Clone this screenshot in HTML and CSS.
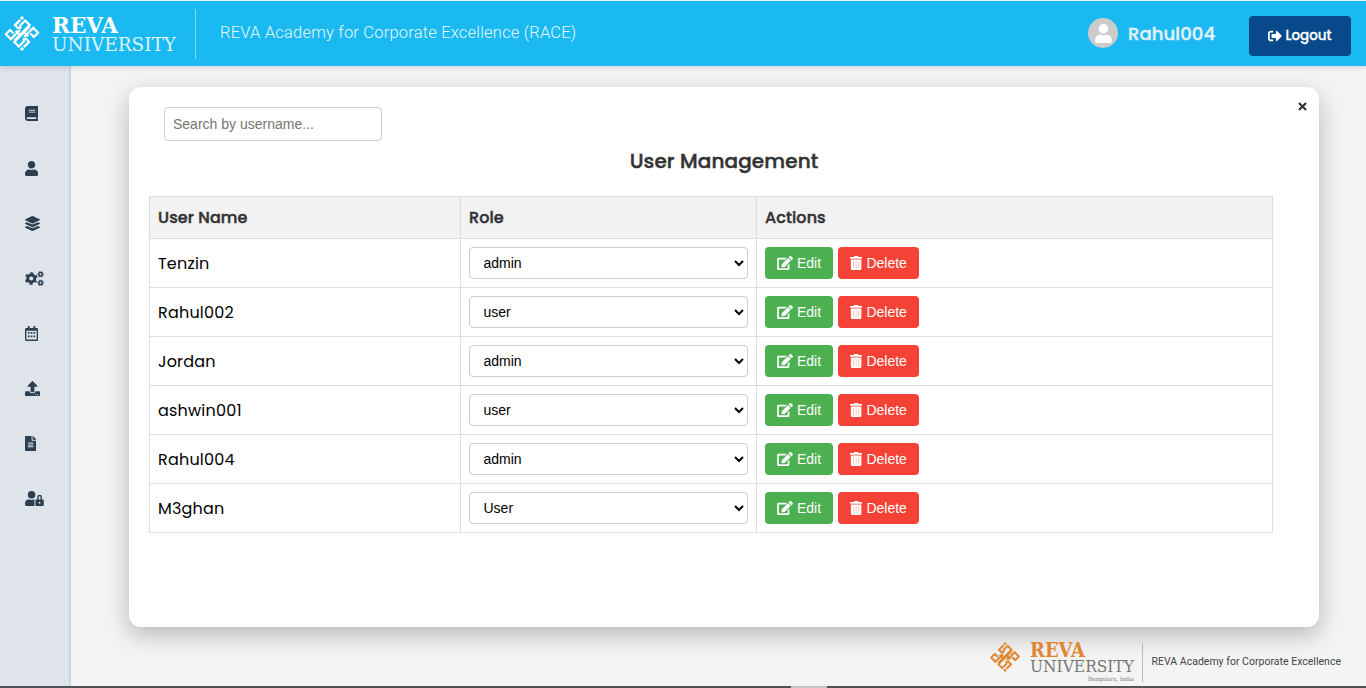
FILE: index.html
```html
<!DOCTYPE html>
<html lang="en">
<head>
<meta charset="utf-8">
<title>User Management</title>
<link rel="stylesheet" href="styles.css">
</head>
<body>
<svg class="defs" width="0" height="0">
  <symbol id="knot" viewBox="-50 -50 100 100">
    <g fill="none" stroke="currentColor" stroke-width="6.500">
      <path id="k" d="M6 10L32-16L46-2L34 10L24 0"/>
      <use href="#k" transform="rotate(180)"/>
      <path id="t" d="M-9-13L-20-24L-5-39M-5-13L-5-23L9-37L22-24L-22 20"/>
      <use href="#t" transform="rotate(180)"/>
      <path d="M-18-8L-6 4M18 8L6-4"/>
    </g>
    <path fill="currentColor" d="M0-50l6 6-6 6-6-6zM0 38l6 6-6 6-6-6z"/>
  </symbol>
  <symbol id="edit" viewBox="0 0 576 512"><path d="M402.6 83.2l90.2 90.2c3.8 3.8 3.8 10 0 13.8L274.4 405.6l-92.8 10.3c-12.4 1.4-22.9-9.1-21.5-21.5l10.3-92.8L388.8 83.2c3.8-3.8 10-3.8 13.8 0zm162-22.9l-48.8-48.8c-15.2-15.2-39.9-15.2-55.2 0l-35.4 35.4c-3.8 3.8-3.8 10 0 13.8l90.2 90.2c3.8 3.8 10 3.8 13.8 0l35.4-35.4c15.2-15.3 15.2-40 0-55.2zM384 346.2V448H64V128h229.8c3.2 0 6.2-1.3 8.5-3.5l40-40c7.6-7.6 2.2-20.5-8.5-20.5H48C21.5 64 0 85.5 0 112v352c0 26.5 21.5 48 48 48h352c26.5 0 48-21.5 48-48V306.2c0-10.7-12.9-16-20.5-8.5l-40 40c-2.2 2.3-3.5 5.3-3.5 8.5z"/></symbol>
  <symbol id="trash" viewBox="0 0 448 512"><path fill-opacity=".65" d="M96 190h256v270H96z"/><path d="M32 464a48 48 0 0 0 48 48h288a48 48 0 0 0 48-48V128H32zm272-256a16 16 0 0 1 32 0v224a16 16 0 0 1-32 0zm-96 0a16 16 0 0 1 32 0v224a16 16 0 0 1-32 0zm-96 0a16 16 0 0 1 32 0v224a16 16 0 0 1-32 0zM432 32H312l-9.4-18.7A24 24 0 0 0 281.1 0H166.8a23.72 23.72 0 0 0-21.4 13.3L136 32H16A16 16 0 0 0 0 48v32a16 16 0 0 0 16 16h416a16 16 0 0 0 16-16V48a16 16 0 0 0-16-16z"/></symbol>
  <symbol id="user" viewBox="0 0 448 512"><path d="M224 256c70.7 0 128-57.3 128-128S294.7 0 224 0 96 57.3 96 128s57.3 128 128 128zm89.6 32h-16.7c-22.2 10.2-46.9 16-72.9 16s-50.6-5.8-72.9-16h-16.7C60.2 288 0 348.2 0 422.4V464c0 26.5 21.5 48 48 48h352c26.5 0 48-21.5 48-48v-41.6c0-74.2-60.2-134.4-134.4-134.4z"/></symbol>
</svg>

<header class="topbar">
  <svg class="brand" width="200" height="65" viewBox="0 1 200 65">
    <use href="#knot" x="4.500" y="16" width="35" height="35"/>
    <g class="slab" fill="#fff">
      <text class="slab-bold" x="52" y="32.500" font-size="22.500" textLength="66" lengthAdjust="spacingAndGlyphs">REVA</text>
      <text x="52" y="51" font-size="19" textLength="124" lengthAdjust="spacingAndGlyphs" fill-opacity=".85">UNIVERSITY</text>
    </g>
    <path d="M195.500 9V59" stroke="#fff" stroke-opacity=".45"/>
  </svg>
  <span class="academy">REVA Academy for Corporate Excellence (RACE)</span>
  <div class="account">
    <span class="avatar"><svg width="17" height="19"><use href="#user"/></svg></span>
    <span class="account-name">Rahul004</span>
    <button class="logout"><svg width="14" height="14" viewBox="0 0 512 512"><path d="M497 273L329 441c-15 15-41 4.500-41-17v-96H152c-13.300 0-24-10.700-24-24v-96c0-13.300 10.700-24 24-24h136V88c0-21.400 25.900-32 41-17l168 168c9.300 9.400 9.300 24.600 0 34zM192 436v-40c0-6.600-5.400-12-12-12H96c-17.700 0-32-14.300-32-32V160c0-17.700 14.300-32 32-32h84c6.600 0 12-5.400 12-12V76c0-6.600-5.400-12-12-12H96c-53 0-96 43-96 96v192c0 53 43 96 96 96h84c6.600 0 12-5.400 12-12z"/></svg><span>Logout</span></button>
  </div>
</header>

<div class="shell">
  <nav class="sidebar">
    <svg width="13.100" height="15" viewBox="0 0 448 512"><path d="M448 360V24c0-13.300-10.700-24-24-24H96C43 0 0 43 0 96v320c0 53 43 96 96 96h328c13.300 0 24-10.700 24-24v-16c0-7.500-3.500-14.300-8.900-18.700-4.200-15.400-4.200-59.300 0-74.700 5.400-4.300 8.900-11.100 8.900-18.600zM128 134c0-3.300 2.700-6 6-6h212c3.300 0 6 2.700 6 6v20c0 3.300-2.700 6-6 6H134c-3.300 0-6-2.700-6-6v-20zm0 64c0-3.300 2.700-6 6-6h212c3.300 0 6 2.700 6 6v20c0 3.300-2.700 6-6 6H134c-3.300 0-6-2.700-6-6v-20zm253.400 250H96c-17.700 0-32-14.300-32-32 0-17.600 14.400-32 32-32h285.400c-1.900 17.100-1.900 46.900 0 64z"/></svg>
    <svg width="13.100" height="15"><use href="#user"/></svg>
    <svg width="15" height="15" viewBox="0 0 512 512"><path d="M12.410 148.020l232.940 105.670c6.800 3.090 14.490 3.090 21.290 0l232.940-105.670c16.550-7.510 16.550-32.520 0-40.030L266.650 2.310a25.607 25.607 0 0 0-21.290 0L12.410 107.980c-16.550 7.510-16.550 32.530 0 40.040zm487.180 88.280l-58.090-26.330-161.640 73.270c-7.560 3.430-15.590 5.170-23.860 5.170s-16.290-1.740-23.860-5.170L70.510 209.970l-58.100 26.330c-16.550 7.500-16.550 32.500 0 40l232.940 105.590c6.800 3.080 14.490 3.080 21.290 0L499.590 276.300c16.550-7.500 16.550-32.500 0-40zm0 127.800l-57.870-26.230-161.860 73.370c-7.560 3.430-15.590 5.170-23.860 5.170s-16.290-1.740-23.860-5.170L70.290 337.870 12.410 364.100c-16.550 7.500-16.550 32.500 0 40l232.940 105.590c6.800 3.080 14.490 3.080 21.290 0L499.590 404.100c16.550-7.500 16.550-32.500 0-40z"/></svg>
    <svg width="18.800" height="15" viewBox="0 0 640 512">
      <g fill="none" stroke="currentColor">
        <circle cx="212" cy="256" r="120" stroke-width="98"/>
        <circle cx="212" cy="256" r="186" stroke-width="62" stroke-dasharray="100 94.780" stroke-dashoffset="50" transform="rotate(30 212 256)"/>
        <g id="cog"><circle cx="532" cy="112" r="62" stroke-width="50"/><circle cx="532" cy="112" r="94" stroke-width="30" stroke-dasharray="56 42.430" stroke-dashoffset="28"/></g>
        <use href="#cog" y="290"/>
      </g>
    </svg>
    <svg width="13.100" height="15" viewBox="0 0 448 512"><path fill-rule="evenodd" d="M96 12q0-12 12-12h40q12 0 12 12v52h128V12q0-12 12-12h40q12 0 12 12v52h48q48 0 48 48v352q0 48-48 48H48q-48 0-48-48V112q0-48 48-48h48zM48 160v304h352V160z"/><path d="M98 208h60v60H98zM194 208h60v60h-60zM290 208h60v60h-60zM98 328h60v60H98zM194 328h60v60h-60zM290 328h60v60h-60z"/></svg>
    <svg width="15" height="15" viewBox="0 0 512 512"><path d="M296 384h-80c-13.300 0-24-10.700-24-24V192h-87.700c-17.800 0-26.700-21.500-14.100-34.100L242.300 5.700c7.500-7.500 19.800-7.500 27.300 0l152.200 152.200c12.600 12.600 3.700 34.100-14.100 34.100H320v168c0 13.300-10.700 24-24 24zm216-8v112c0 13.300-10.700 24-24 24H24c-13.300 0-24-10.700-24-24V376c0-13.300 10.700-24 24-24h136v8c0 30.900 25.100 56 56 56h80c30.900 0 56-25.100 56-56v-8h136c13.300 0 24 10.700 24 24zm-124 88c0-11-9-20-20-20s-20 9-20 20 9 20 20 20 20-9 20-20zm64 0c0-11-9-20-20-20s-20 9-20 20 9 20 20 20 20-9 20-20z"/></svg>
    <svg width="11.300" height="15" viewBox="0 0 384 512"><path d="M224 136V0H24C10.700 0 0 10.700 0 24v464c0 13.300 10.700 24 24 24h336c13.300 0 24-10.700 24-24V160H248c-13.200 0-24-10.800-24-24zm64 236c0 6.600-5.400 12-12 12H108c-6.600 0-12-5.400-12-12v-8c0-6.600 5.400-12 12-12h168c6.600 0 12 5.400 12 12v8zm0-64c0 6.600-5.400 12-12 12H108c-6.600 0-12-5.400-12-12v-8c0-6.600 5.400-12 12-12h168c6.600 0 12 5.400 12 12v8zm0-72v8c0 6.600-5.400 12-12 12H108c-6.600 0-12-5.400-12-12v-8c0-6.600 5.400-12 12-12h168c6.600 0 12 5.400 12 12zm96-114.100v6.100H256V0h6.100c6.400 0 12.500 2.500 17 7l97.900 98c4.500 4.500 7 10.600 7 16.900z"/></svg>
    <svg width="18.800" height="15" viewBox="0 0 640 512"><path d="M224 256A128 128 0 1 0 96 128a128 128 0 0 0 128 128zm96 64a63.080 63.080 0 0 1 8.100-30.500c-4.800-.5-9.500-1.500-14.500-1.500h-16.700a174.080 174.080 0 0 1-145.800 0h-16.700A134.430 134.430 0 0 0 0 422.400V464a48 48 0 0 0 48 48h280.900a63.540 63.540 0 0 1-8.900-32zm288-32h-32v-80a80 80 0 0 0-160 0v80h-32a32 32 0 0 0-32 32v160a32 32 0 0 0 32 32h224a32 32 0 0 0 32-32V320a32 32 0 0 0-32-32zM496 432a32 32 0 1 1 32-32 32 32 0 0 1-32 32zm32-144h-64v-80a32 32 0 0 1 64 0z"/></svg>
  </nav>

  <main class="content">
    <section class="card">
      <div class="card-head">
        <input class="search" type="text" placeholder="Search by username...">
        <svg class="close" width="9" height="13" viewBox="0 0 352 512"><path d="M36 116L316 396M316 116L36 396" fill="none" stroke="currentColor" stroke-width="84"/></svg>
      </div>
      <h2 class="title">User Management</h2>
      <table class="users">
        <colgroup><col class="col-name"><col class="col-role"><col></colgroup>
        <thead><tr><th>User Name</th><th>Role</th><th>Actions</th></tr></thead>
        <tbody>
          <tr><td>Tenzin</td><td><select><option>admin</option></select></td><td><div class="actions"><button class="btn edit"><svg width="16" height="14"><use href="#edit"/></svg>Edit</button><button class="btn delete"><svg width="12.250" height="14"><use href="#trash"/></svg>Delete</button></div></td></tr>
          <tr><td>Rahul002</td><td><select><option>user</option></select></td><td><div class="actions"><button class="btn edit"><svg width="16" height="14"><use href="#edit"/></svg>Edit</button><button class="btn delete"><svg width="12.250" height="14"><use href="#trash"/></svg>Delete</button></div></td></tr>
          <tr><td>Jordan</td><td><select><option>admin</option></select></td><td><div class="actions"><button class="btn edit"><svg width="16" height="14"><use href="#edit"/></svg>Edit</button><button class="btn delete"><svg width="12.250" height="14"><use href="#trash"/></svg>Delete</button></div></td></tr>
          <tr><td>ashwin001</td><td><select><option>user</option></select></td><td><div class="actions"><button class="btn edit"><svg width="16" height="14"><use href="#edit"/></svg>Edit</button><button class="btn delete"><svg width="12.250" height="14"><use href="#trash"/></svg>Delete</button></div></td></tr>
          <tr><td>Rahul004</td><td><select><option>admin</option></select></td><td><div class="actions"><button class="btn edit"><svg width="16" height="14"><use href="#edit"/></svg>Edit</button><button class="btn delete"><svg width="12.250" height="14"><use href="#trash"/></svg>Delete</button></div></td></tr>
          <tr><td>M3ghan</td><td><select><option>User</option></select></td><td><div class="actions"><button class="btn edit"><svg width="16" height="14"><use href="#edit"/></svg>Edit</button><button class="btn delete"><svg width="12.250" height="14"><use href="#trash"/></svg>Delete</button></div></td></tr>
        </tbody>
      </table>
    </section>
    <footer class="footer">
      <svg width="376" height="46" viewBox="984 638 376 46">
        <g color="#e08530"><use href="#knot" x="990" y="642" width="30" height="30"/></g>
        <g class="slab">
          <text class="slab-bold" x="1030" y="657" font-size="20" fill="#e08530" textLength="55" lengthAdjust="spacingAndGlyphs">REVA</text>
          <text x="1030" y="672" font-size="16" fill="#777" textLength="104" lengthAdjust="spacingAndGlyphs">UNIVERSITY</text>
          <text x="1088" y="681" font-size="6" fill="#777" textLength="46" lengthAdjust="spacingAndGlyphs">Bengaluru, India</text>
        </g>
        <path d="M1142.500 643V682" stroke="#bbb"/>
        <text class="footer-text" x="1151.500" y="665" textLength="189.500">REVA Academy for Corporate Excellence</text>
      </svg>
    </footer>
  </main>
</div>
<div class="scrollbar"><span class="thumb"></span></div>
</body>
</html>
```
FILE: styles.css
```css
* { box-sizing: border-box; }
body {
  margin: 0;
  height: 688px;
  overflow: hidden;
  display: flex;
  flex-direction: column;
  background: #f4f4f4;
  border-top: 1px solid #e8f3f8;
  font-family: Poppins, Inter, sans-serif;
}
svg { display: block; fill: currentColor; }
.defs { position: absolute; }
.topbar {
  position: relative;
  z-index: 1;
  flex: none;
  height: 65px;
  display: flex;
  background: #1bb9f1;
  color: #fff;
  box-shadow: 0 2px 5px rgba(0, 0, 0, .12);
}
.slab { font-family: "DejaVu Serif", serif; }
.slab-bold { font-weight: 700; }
.academy {
  margin: 21px 0 0 20px;
  font: 300 16.5px/21px Roboto, sans-serif;
  letter-spacing: .2px;
  white-space: nowrap;
  color: rgba(255, 255, 255, .92);
}
.account { margin-left: auto; padding-right: 15px; display: flex; align-items: center; }
.avatar {
  width: 30px;
  height: 30px;
  margin: -1px 10px 0 0;
  border-radius: 50%;
  background: #ccc;
  display: grid;
  place-items: center;
}
.account-name {
  width: 121px;
  font-size: 18px;
  font-weight: 500;
  -webkit-text-stroke: .4px currentColor;
  letter-spacing: .1px;
  color: #e2f1f8;
}
.logout {
  width: 102px;
  height: 40px;
  margin-top: 5px;
  padding: 0;
  border: 0;
  border-radius: 4px;
  background: #07498a;
  color: #fff;
  display: flex;
  align-items: center;
  justify-content: center;
  gap: 3px;
  font: 500 13.5px/20px Poppins, Inter, sans-serif;
  -webkit-text-stroke: .3px currentColor;
}
.shell { flex: 1; min-height: 0; display: flex; }
.sidebar {
  width: 71px;
  padding: 40px 0 0 25px;
  display: flex;
  flex-direction: column;
  gap: 40px;
  background: #dfe4eb;
  border-right: 2px solid #cbd5dc;
  color: #2c3e50;
}
.content { flex: 1; padding: 21px 0 0 58px; }
.card {
  width: 1190px;
  height: 540px;
  padding: 20px;
  border-radius: 12px;
  background: #fff;
  box-shadow: 0 8px 24px rgba(0, 0, 0, .25);
}
.card-head { display: flex; justify-content: space-between; padding-left: 15px; height: 34px; }
.search {
  width: 218px;
  height: 34px;
  padding: 8px;
  border: 1px solid #ccc;
  border-radius: 4px;
  font: 14px "Liberation Sans", sans-serif;
}
.search::placeholder { color: #757575; }
.close { margin: -7px -8px 0 0; color: #333; }
.title {
  width: 1150px;
  margin: 5px 0 20px;
  font-size: 20px;
  line-height: 30px;
  font-weight: 500;
  -webkit-text-stroke: .45px currentColor;
  letter-spacing: .12px;
  text-align: center;
  color: #333;
}
.users { width: 1124px; table-layout: fixed; border-collapse: collapse; }
.col-name { width: 311px; }
.col-role { width: 296px; }
.users th, .users td { padding: 0 8px; border: 1px solid #ddd; text-align: left; }
.users th {
  height: 42px;
  background: #f2f2f2;
  color: #333;
  font-size: 16px;
  font-weight: 500;
  letter-spacing: .1px;
  -webkit-text-stroke: .45px currentColor;
}
.users td { height: 49px; font-size: 16px; letter-spacing: .2px; color: #000; }
.users select {
  display: block;
  width: 279px;
  height: 32px;
  padding: 0 1px 0 9.5px;
  border: 1px solid #ccc;
  border-radius: 4px;
  background: #fff;
  color: #000;
  font: 14px "Liberation Sans", sans-serif;
}
.actions { display: flex; gap: 5px; }
.btn {
  height: 32px;
  padding: 0;
  border: 0;
  border-radius: 4px;
  color: #fff;
  display: flex;
  align-items: center;
  justify-content: center;
  gap: 4px;
  font: 14px "Liberation Sans", sans-serif;
}
.edit { width: 68px; background: #4caf50; }
.delete { width: 81px; background: #f44336; }
.footer { padding: 11px 0 0 855px; }
.footer-text { font: 400 10.500px Roboto, sans-serif; fill: #444; }
.scrollbar { flex: none; height: 2px; background: #505256; }
.thumb { display: block; width: 36px; height: 2px; margin-left: 791px; background: #c5c6c8; }
```
